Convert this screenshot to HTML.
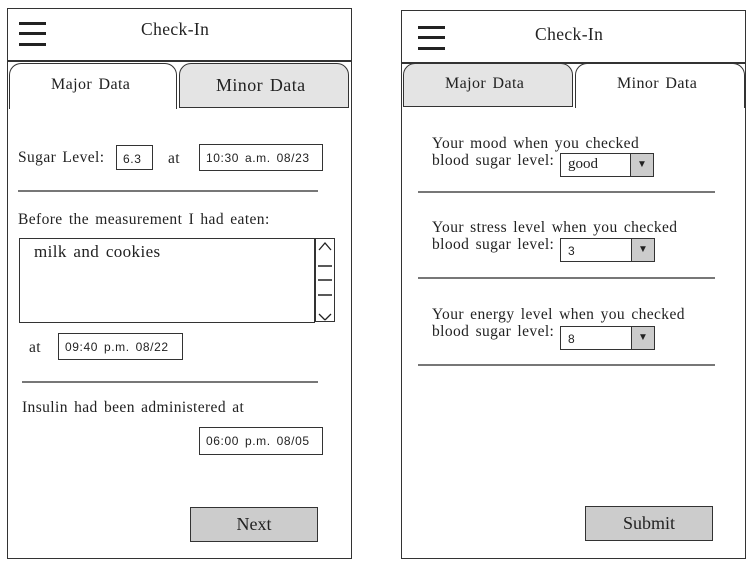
<!DOCTYPE html>
<html><head><style>
body{margin:0;width:752px;height:570px;background:#fff;position:relative;overflow:hidden;font-family:"Liberation Serif",serif;color:#222}
.a{position:absolute;box-sizing:border-box}
.b{border:1.5px solid #333}
.t{position:absolute;white-space:nowrap;font-size:15.5px;letter-spacing:0.4px;word-spacing:2px}
.s{font-family:"Liberation Sans",sans-serif;font-size:12px;letter-spacing:0.6px;word-spacing:2px;padding:6px 0 0 6px}
.hr{position:absolute;height:1.5px;background:#777}
.bar{position:absolute;height:3px;background:#222;width:27px}
.dd{font-family:"Liberation Sans",sans-serif;font-size:12px;padding:5px 0 0 7px;background:#fff}
.dd i{position:absolute;right:0;top:0;bottom:0;width:22px;background:#ccc;border-left:1.5px solid #333;font-style:normal;font-size:10px;text-align:center;line-height:22px}
</style></head><body>
<!-- left phone -->
<div class="a b" style="left:7px;top:8px;width:345px;height:551px"></div>
<div class="hr" style="left:7px;top:60px;width:345px;background:#333"></div>
<div class="bar" style="left:19px;top:22px"></div><div class="bar" style="left:19px;top:32px"></div><div class="bar" style="left:19px;top:43px"></div>
<div class="t" style="left:141px;top:19px;font-size:17.5px">Check-In</div>
<div class="a b" style="left:9px;top:63px;width:168px;height:46px;border-radius:12px 12px 0 0;border-bottom:none;background:#fff"></div>
<div class="a b" style="left:179px;top:63px;width:170px;height:45px;border-radius:12px 12px 0 0;background:#e4e4e4"></div>
<div class="t" style="left:51px;top:76px;font-size:16px">Major Data</div>
<div class="t" style="left:216px;top:75px;font-size:18px">Minor Data</div>
<div class="t" style="left:18px;top:149px">Sugar Level:</div>
<div class="a b s" style="left:116px;top:145px;width:37px;height:25px">6.3</div>
<div class="t" style="left:168px;top:150px">at</div>
<div class="a b s" style="left:199px;top:144px;width:124px;height:27px">10:30 a.m. 08/23</div>
<div class="hr" style="left:18px;top:190px;width:300px"></div>
<div class="t" style="left:18px;top:211px">Before the measurement I had eaten:</div>
<div class="a b" style="left:19px;top:238px;width:296px;height:85px"></div>
<div class="t" style="left:34px;top:242px;font-size:17px">milk and cookies</div>
<div class="a b" style="left:315px;top:238px;width:20px;height:84px"></div>
<svg class="a" style="left:315px;top:238px" width="20" height="84"><path d="M4 12 L10 5 L16 12 M4 76 L10 82 M10 82 L16 76" stroke="#222" stroke-width="1.3" fill="none"/><path d="M3 28H17M3 42H17M3 57H17" stroke="#222" stroke-width="1.5"/></svg>
<div class="t" style="left:29px;top:339px">at</div>
<div class="a b s" style="left:58px;top:333px;width:125px;height:27px">09:40 p.m. 08/22</div>
<div class="hr" style="left:22px;top:381px;width:296px"></div>
<div class="t" style="left:22px;top:399px">Insulin had been administered at</div>
<div class="a b s" style="left:199px;top:427px;width:124px;height:28px">06:00 p.m. 08/05</div>
<div class="a b" style="left:190px;top:507px;width:128px;height:35px;background:#ccc;text-align:center;font-size:18px;line-height:32px">Next</div>
<!-- right phone -->
<div class="a b" style="left:401px;top:10px;width:345px;height:549px"></div>
<div class="hr" style="left:401px;top:62px;width:345px;background:#333"></div>
<div class="bar" style="left:418px;top:26px"></div><div class="bar" style="left:418px;top:36px"></div><div class="bar" style="left:418px;top:47px"></div>
<div class="t" style="left:535px;top:24px;font-size:17.5px">Check-In</div>
<div class="a b" style="left:403px;top:63px;width:170px;height:44px;border-radius:12px 12px 0 0;background:#e4e4e4"></div>
<div class="a b" style="left:575px;top:63px;width:170px;height:45px;border-radius:12px 12px 0 0;border-bottom:none;background:#fff"></div>
<div class="t" style="left:445px;top:75px;font-size:16px">Major Data</div>
<div class="t" style="left:617px;top:75px;font-size:16px">Minor Data</div>
<div class="t" style="left:432px;top:135px">Your mood when you checked</div>
<div class="t" style="left:432px;top:152px">blood sugar level:</div>
<div class="a b dd" style="left:560px;top:153px;width:94px;height:24px;font-family:'Liberation Serif',serif;font-size:15px;padding-top:2px">good<i>▼</i></div>
<div class="hr" style="left:418px;top:191px;width:297px"></div>
<div class="t" style="left:432px;top:219px">Your stress level when you checked</div>
<div class="t" style="left:432px;top:236px">blood sugar level:</div>
<div class="a b dd" style="left:560px;top:238px;width:95px;height:24px">3<i>▼</i></div>
<div class="hr" style="left:418px;top:277px;width:297px"></div>
<div class="t" style="left:432px;top:306px">Your energy level when you checked</div>
<div class="t" style="left:432px;top:323px">blood sugar level:</div>
<div class="a b dd" style="left:560px;top:326px;width:95px;height:24px">8<i>▼</i></div>
<div class="hr" style="left:418px;top:364px;width:297px"></div>
<div class="a b" style="left:585px;top:506px;width:128px;height:35px;background:#ccc;text-align:center;font-size:18px;line-height:32px">Submit</div>
</body></html>
